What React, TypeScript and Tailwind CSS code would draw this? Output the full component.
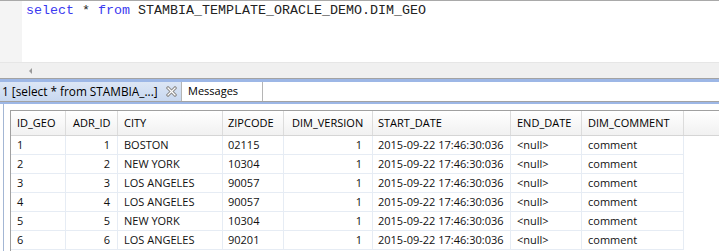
import React from 'react';

type Col = { key: string; label: string; w: string; pl: string; pr: string; right?: boolean };

const cols: Col[] = [
  { key: 'id', label: 'ID_GEO', w: 'w-[55px]', pl: 'pl-[6px]', pr: 'pr-[4px]' },
  { key: 'adr', label: 'ADR_ID', w: 'w-[52px]', pl: 'pl-[7px]', pr: 'pr-[7px]', right: true },
  { key: 'city', label: 'CITY', w: 'w-[105px]', pl: 'pl-[6px]', pr: 'pr-[4px]' },
  { key: 'zip', label: 'ZIPCODE', w: 'w-[61px]', pl: 'pl-[5px]', pr: 'pr-[4px]' },
  { key: 'ver', label: 'DIM_VERSION', w: 'w-[89px]', pl: 'pl-[8px]', pr: 'pr-[10px]', right: true },
  { key: 'start', label: 'START_DATE', w: 'w-[138px]', pl: 'pl-[5px]', pr: 'pr-[4px]' },
  { key: 'end', label: 'END_DATE', w: 'w-[71px]', pl: 'pl-[6px]', pr: 'pr-[4px]' },
  { key: 'comment', label: 'DIM_COMMENT', w: 'w-[102px]', pl: 'pl-[6px]', pr: 'pr-[4px]' },
];

const rows: Record<string, string>[] = [
  { id: '1', adr: '1', city: 'BOSTON', zip: '02115' },
  { id: '2', adr: '2', city: 'NEW YORK', zip: '10304' },
  { id: '3', adr: '3', city: 'LOS ANGELES', zip: '90057' },
  { id: '4', adr: '4', city: 'LOS ANGELES', zip: '90057' },
  { id: '5', adr: '5', city: 'NEW YORK', zip: '10304' },
  { id: '6', adr: '6', city: 'LOS ANGELES', zip: '90201' },
].map(r => ({ ...r, ver: '1', start: '2015-09-22 17:46:30:036', end: '<null>', comment: 'comment' }));

const CloseIcon = () => (
  <svg width="11" height="11" viewBox="0 0 11 11" className="ml-[8px]">
    <path d="M2 2 L9 9 M9 2 L2 9" stroke="#8d8d8d" strokeWidth="3.2" strokeLinecap="square" />
    <path d="M2 2 L9 9 M9 2 L2 9" stroke="#ffffff" strokeWidth="1.2" strokeLinecap="square" />
  </svg>
);

export default function App() {
  return (
    <div className="w-[719px] h-[251px] overflow-hidden bg-white font-['Open_Sans',sans-serif] text-[11px] text-[#111]">
      {/* SQL editor */}
      <div className="flex h-[62px] border-t border-[#a9a9a9]">
        <div className="w-[22px] bg-[#f4f4f4]" />
        <div className="flex-1 bg-white pl-[4px] pt-[2px] font-['Liberation_Mono',monospace] text-[13.33px] leading-[16px] text-[#222]">
          <span className="text-[#3a3af0]">select</span> * <span className="text-[#3a3af0]">from</span> STAMBIA_TEMPLATE_ORACLE_DEMO.DIM_GEO
        </div>
      </div>

      {/* horizontal scrollbar */}
      <div className="flex h-[16px] items-center border-t border-[#e6e6e6] bg-[#f0f0f0]">
        <div className="ml-[29px] h-0 w-0 border-y-[3px] border-r-[3px] border-y-transparent border-r-[#9a9a9a]" />
      </div>

      <div className="h-px bg-[#a3a3a3]" />
      <div className="h-[3px] bg-[#9db7e6]" />

      {/* tabs */}
      <div className="flex h-[19px] bg-white text-black">
        <div className="flex w-[181px] items-center bg-gradient-to-b from-[#dce6f5] to-[#c8d8f0] pl-[2px]">
          <span className="text-[11.8px]">1 [select * from STAMBIA_...]</span>
          <CloseIcon />
        </div>
        <div className="flex w-[82px] items-center border-x border-[#b5b5b5] pl-[6px]">Messages</div>
        <div className="flex-1" />
      </div>
      <div className="h-px bg-[#a3a3a3]" />
      <div className="h-[2px] bg-[#9db7e6]" />

      {/* results */}
      <div className="flex h-[147px]">
        <div className="ml-[3px] w-px bg-[#a3b6d4]" />
        <div className="ml-[6px] mt-[6px] flex-1 border-l border-t border-[#a0a0a0]">
          <div className="flex h-[25px] border-b border-[#d5d5d5] bg-gradient-to-b from-white to-[#f1f1f1] text-black">
            {cols.map(c => (
              <div key={c.key} className={`${c.w} ${c.pl} flex shrink-0 items-center border-r border-[#dcdcdc]`}>
                {c.label}
              </div>
            ))}
            <div className="flex-1" />
          </div>
          {rows.map((r, i) => (
            <div key={i} className="flex h-[19px]">
              {cols.map(c => (
                <div
                  key={c.key}
                  className={`${c.w} ${c.right ? `justify-end ${c.pr}` : c.pl} flex shrink-0 items-center border-b border-r border-[#e6ecf4]`}
                >
                  {r[c.key]}
                </div>
              ))}
            </div>
          ))}
        </div>
      </div>
    </div>
  );
}
